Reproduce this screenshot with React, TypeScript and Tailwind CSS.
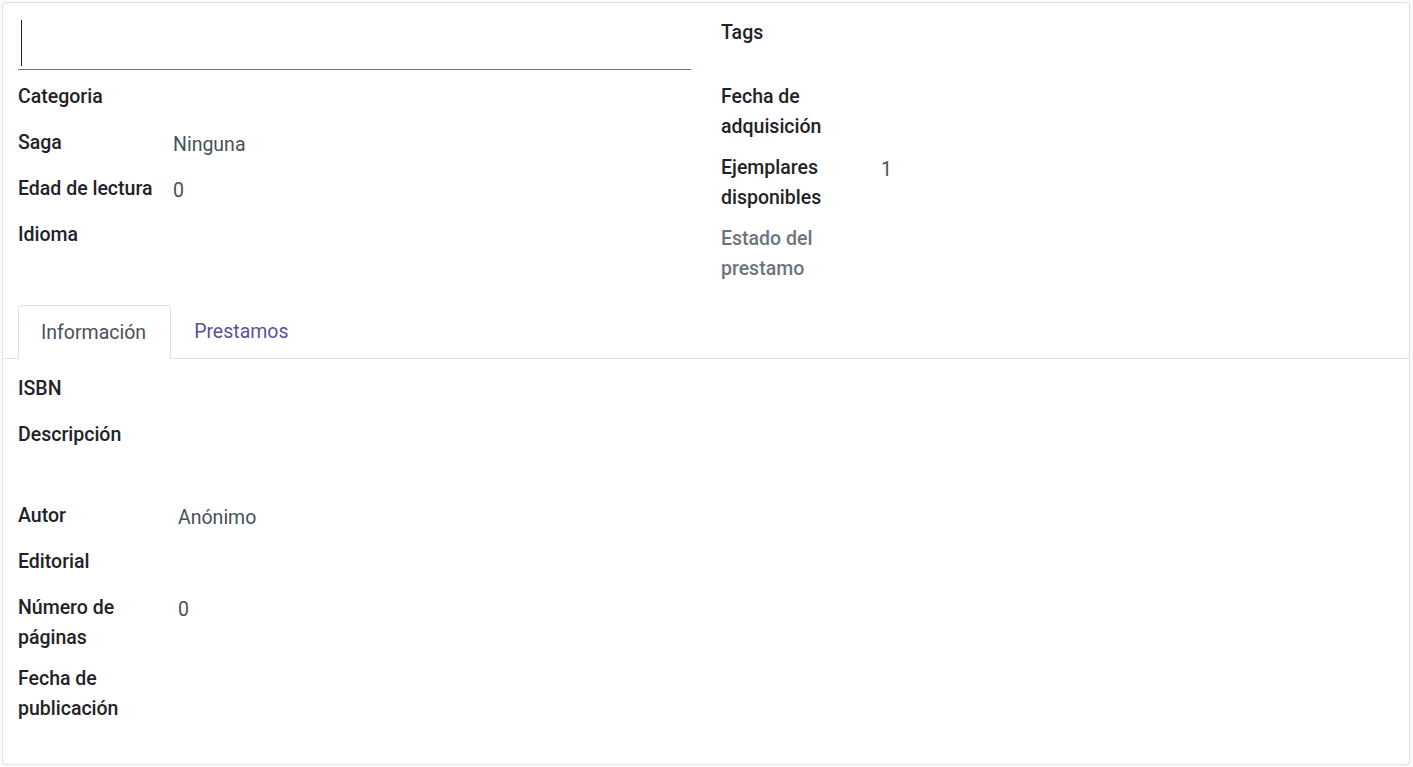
const font = { fontFamily: 'Roboto, "Noto Sans", Arial, sans-serif' };

function Field({
  label,
  value,
  labelW = 'w-[155px]',
  muted = false,
  h = 'min-h-[35px]',
}: {
  label: React.ReactNode;
  value?: string;
  labelW?: string;
  muted?: boolean;
  h?: string;
}) {
  return (
    <div className={`flex mb-[11px] ${h}`}>
      <div
        className={`${labelW} shrink-0 font-medium leading-[30px] ${
          muted ? 'text-[#6c757d]' : 'text-[#1f2328]'
        }`}
      >
        {label}
      </div>
      {value !== undefined && (
        <div className="pt-[2px] leading-[30px] text-[#495057]">{value}</div>
      )}
    </div>
  );
}

export default function App() {
  return (
    <div className="min-h-[767px] bg-[#f9fafb] p-[2px] text-[19.5px]" style={font}>
      <div className="h-[763px] w-[1408px] rounded-[4px] border border-[#dee2e6] bg-white">
        {/* header fields */}
        <div className="grid grid-cols-2 gap-[30px] px-[15px] pt-[13px]">
          <div>
            <div className="mb-[12px] h-[54px] border-b border-[#7268a6] pl-[3px] pt-[4px]">
              <div className="h-[46px] w-[1px] bg-[#1f2328]" />
            </div>
            <Field label="Categoria" />
            <Field label="Saga" value="Ninguna" />
            <Field label="Edad de lectura" value="0" />
            <Field label="Idioma" />
          </div>
          <div className="pt-[2px]">
            <Field label="Tags" labelW="w-[160px]" h="min-h-[53px]" />
            <Field
              label={<>Fecha de<br />adquisición</>}
              labelW="w-[160px]"
            />
            <Field
              label={<>Ejemplares<br />disponibles</>}
              labelW="w-[160px]"
              value="1"
            />
            <Field
              label={<>Estado del<br />prestamo</>}
              labelW="w-[160px]"
              muted
            />
          </div>
        </div>

        {/* tabs */}
        <div className="mt-[10px] flex border-b border-[#dee2e6] pl-[15px]">
          <div className="mb-[-1px] rounded-t-[5px] border border-b-0 border-[#dee2e6] bg-white pl-[22px] pr-[24px] leading-[53px] text-[#495057]">
            Información
          </div>
          <div className="px-[23px] leading-[53px] text-[#5f4f9a]">Prestamos</div>
        </div>

        {/* notebook page */}
        <div className="px-[15px] pt-[15px]">
          <Field label="ISBN" labelW="w-[160px]" />
          <Field label="Descripción" labelW="w-[160px]" h="min-h-[70px]" />
          <Field label="Autor" labelW="w-[160px]" value="Anónimo" />
          <Field label="Editorial" labelW="w-[160px]" />
          <Field
            label={<>Número de<br />páginas</>}
            labelW="w-[160px]"
            value="0"
          />
          <Field
            label={<>Fecha de<br />publicación</>}
            labelW="w-[160px]"
          />
        </div>
      </div>
    </div>
  );
}
